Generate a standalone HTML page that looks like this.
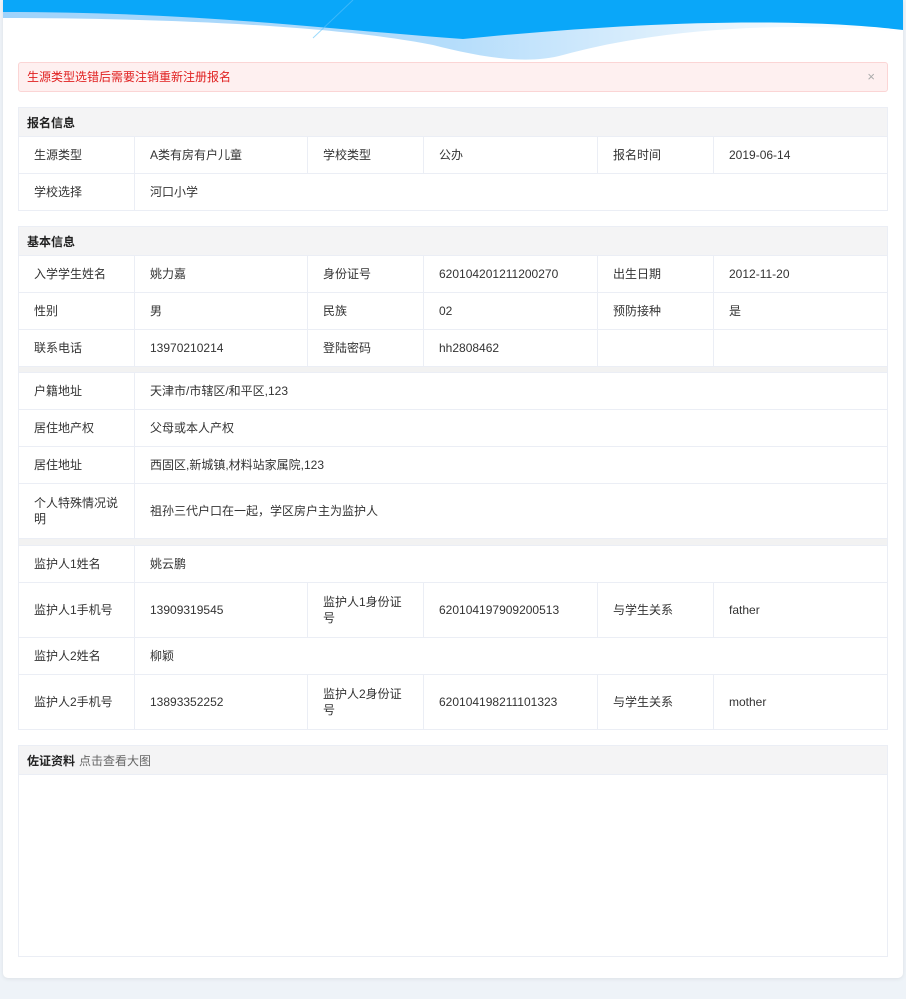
<!DOCTYPE html>
<html><head><meta charset="utf-8"><style>
body{margin:0;background:#eef3f8;font-family:"Liberation Sans","Noto Sans CJK SC",sans-serif;font-size:12px;color:#333;}
.card{position:absolute;left:3px;top:0;width:900px;height:978px;background:#fff;border-radius:0 0 5px 5px;box-shadow:0 1px 4px rgba(0,0,0,.08);overflow:hidden}
.a{position:absolute;box-sizing:border-box}
.c{position:absolute;box-sizing:border-box;border:1px solid #ebeef5;padding-left:15px;display:flex;align-items:center;line-height:16px;background:#fff}
.h{position:absolute;box-sizing:border-box;border:1px solid #ebeef5;background:#f4f4f5;padding-left:8px;display:flex;align-items:center;font-weight:bold;color:#222}
.s{position:absolute;left:18px;width:870px;background:#f2f2f2;border-left:1px solid #ebeef5;border-right:1px solid #ebeef5;box-sizing:border-box}
</style></head><body>
<div class="card">
<svg class="a" style="left:0;top:0" width="900" height="70" viewBox="0 0 900 70">
<defs><linearGradient id="g" x1="0" x2="1" y1="0" y2="0"><stop offset="0" stop-color="#9fd3fb"/><stop offset="0.5" stop-color="#b5ddfb"/><stop offset="0.8" stop-color="#e8f4fd"/><stop offset="1" stop-color="#ffffff"/></linearGradient></defs>
<path d="M0 0H900V32C780 20 650 30 560 55C520 66 470 55 430 45C330 25 150 18 0 18Z" fill="url(#g)"/>
<path d="M0 0H900V30C800 18 650 20 460 39C330 30 200 12 0 12Z" fill="#0aa7f9"/>
<path d="M310 38L350 0" stroke="#5cc3fb" stroke-width="1" opacity=".6"/>
</svg>
</div>
<div class="a" style="left:18px;top:62px;width:870px;height:30px;background:#fef0f0;border:1px solid #fbd5d5;border-radius:3px;color:#e02020;padding-left:8px;line-height:28px">生源类型选错后需要注销重新注册报名<span style="position:absolute;right:12px;color:#aaa;font-size:13px">×</span></div>

<div class="h" style="left:18px;top:107px;width:870px;height:30px">报名信息</div>
<div class="c" style="left:18px;top:136px;width:117px;height:38px">生源类型</div>
<div class="c" style="left:134px;top:136px;width:174px;height:38px">A类有房有户儿童</div>
<div class="c" style="left:307px;top:136px;width:117px;height:38px">学校类型</div>
<div class="c" style="left:423px;top:136px;width:175px;height:38px">公办</div>
<div class="c" style="left:597px;top:136px;width:117px;height:38px">报名时间</div>
<div class="c" style="left:713px;top:136px;width:175px;height:38px">2019-06-14</div>
<div class="c" style="left:18px;top:173px;width:117px;height:38px">学校选择</div>
<div class="c" style="left:134px;top:173px;width:754px;height:38px">河口小学</div>

<div class="h" style="left:18px;top:226px;width:870px;height:30px">基本信息</div>
<div class="c" style="left:18px;top:255px;width:117px;height:38px">入学学生姓名</div>
<div class="c" style="left:134px;top:255px;width:174px;height:38px">姚力嘉</div>
<div class="c" style="left:307px;top:255px;width:117px;height:38px">身份证号</div>
<div class="c" style="left:423px;top:255px;width:175px;height:38px">620104201211200270</div>
<div class="c" style="left:597px;top:255px;width:117px;height:38px">出生日期</div>
<div class="c" style="left:713px;top:255px;width:175px;height:38px">2012-11-20</div>
<div class="c" style="left:18px;top:292px;width:117px;height:38px">性别</div>
<div class="c" style="left:134px;top:292px;width:174px;height:38px">男</div>
<div class="c" style="left:307px;top:292px;width:117px;height:38px">民族</div>
<div class="c" style="left:423px;top:292px;width:175px;height:38px">02</div>
<div class="c" style="left:597px;top:292px;width:117px;height:38px">预防接种</div>
<div class="c" style="left:713px;top:292px;width:175px;height:38px">是</div>
<div class="c" style="left:18px;top:329px;width:117px;height:38px">联系电话</div>
<div class="c" style="left:134px;top:329px;width:174px;height:38px">13970210214</div>
<div class="c" style="left:307px;top:329px;width:117px;height:38px">登陆密码</div>
<div class="c" style="left:423px;top:329px;width:175px;height:38px">hh2808462</div>
<div class="c" style="left:597px;top:329px;width:117px;height:38px"></div>
<div class="c" style="left:713px;top:329px;width:175px;height:38px"></div>
<div class="s" style="top:367px;height:6px"></div>
<div class="c" style="left:18px;top:372px;width:117px;height:38px">户籍地址</div>
<div class="c" style="left:134px;top:372px;width:754px;height:38px">天津市/市辖区/和平区,123</div>
<div class="c" style="left:18px;top:409px;width:117px;height:38px">居住地产权</div>
<div class="c" style="left:134px;top:409px;width:754px;height:38px">父母或本人产权</div>
<div class="c" style="left:18px;top:446px;width:117px;height:38px">居住地址</div>
<div class="c" style="left:134px;top:446px;width:754px;height:38px">西固区,新城镇,材料站家属院,123</div>
<div class="c" style="left:18px;top:483px;width:117px;height:56px;padding-right:8px">个人特殊情况说明</div>
<div class="c" style="left:134px;top:483px;width:754px;height:56px">祖孙三代户口在一起，学区房户主为监护人</div>
<div class="s" style="top:539px;height:7px"></div>
<div class="c" style="left:18px;top:545px;width:117px;height:38px">监护人1姓名</div>
<div class="c" style="left:134px;top:545px;width:754px;height:38px">姚云鹏</div>
<div class="c" style="left:18px;top:582px;width:117px;height:56px">监护人1手机号</div>
<div class="c" style="left:134px;top:582px;width:174px;height:56px">13909319545</div>
<div class="c" style="left:307px;top:582px;width:117px;height:56px;padding-right:10px">监护人1身份证号</div>
<div class="c" style="left:423px;top:582px;width:175px;height:56px">620104197909200513</div>
<div class="c" style="left:597px;top:582px;width:117px;height:56px">与学生关系</div>
<div class="c" style="left:713px;top:582px;width:175px;height:56px">father</div>
<div class="c" style="left:18px;top:637px;width:117px;height:38px">监护人2姓名</div>
<div class="c" style="left:134px;top:637px;width:754px;height:38px">柳颖</div>
<div class="c" style="left:18px;top:674px;width:117px;height:56px">监护人2手机号</div>
<div class="c" style="left:134px;top:674px;width:174px;height:56px">13893352252</div>
<div class="c" style="left:307px;top:674px;width:117px;height:56px;padding-right:10px">监护人2身份证号</div>
<div class="c" style="left:423px;top:674px;width:175px;height:56px">620104198211101323</div>
<div class="c" style="left:597px;top:674px;width:117px;height:56px">与学生关系</div>
<div class="c" style="left:713px;top:674px;width:175px;height:56px">mother</div>

<div class="h" style="left:18px;top:745px;width:870px;height:30px">佐证资料<span style="font-weight:normal;color:#666;margin-left:4px">点击查看大图</span></div>
<div class="a" style="left:18px;top:774px;width:870px;height:183px;border:1px solid #ebeef5;border-top:none"></div>
</body></html>
